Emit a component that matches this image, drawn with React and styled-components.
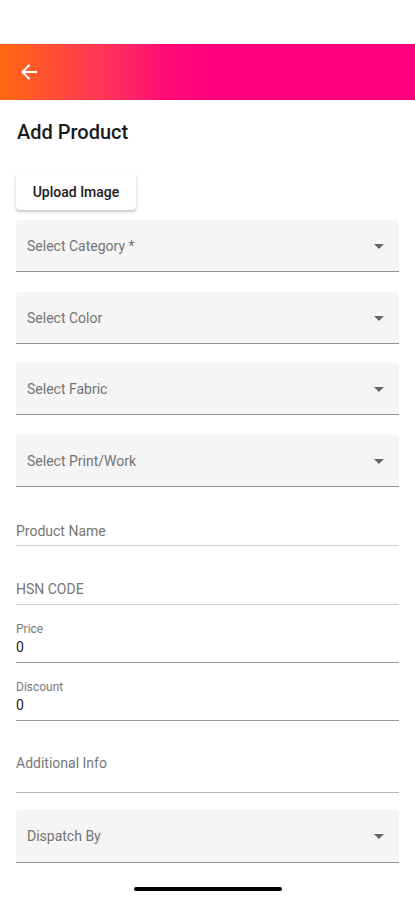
import React from "react";
import styled, { createGlobalStyle } from "styled-components";

const GlobalStyle = createGlobalStyle`
  html, body { margin: 0; padding: 0; background: #ffffff; }
  body { font-family: Roboto, "Noto Sans", Arial, sans-serif; -webkit-font-smoothing: antialiased; }
  * { box-sizing: border-box; }
`;

const Page = styled.div`
  width: 415px;
  height: 900px;
  background: #fff;
  padding-top: 44px;
  display: flex;
  flex-direction: column;
  position: relative;
  overflow: hidden;
`;

const AppBar = styled.header`
  height: 56px;
  display: flex;
  align-items: center;
  padding-left: 17px;
  background: linear-gradient(90deg, #ff6a10 0%, #ff3458 25%, #ff0c76 40%, #ff007f 52%, #ff007f 100%);
`;

const BackButton = styled.button`
  border: 0;
  background: transparent;
  padding: 0;
  width: 24px;
  height: 24px;
  display: flex;
  color: #fff;
`;

const Content = styled.main`
  padding: 0 16px;
  display: flex;
  flex-direction: column;
`;

const Title = styled.h1`
  margin: 20px 0 0 1px;
  font-size: 20px;
  line-height: 24px;
  font-weight: 500;
  color: #1a1a1a;
`;

const UploadButton = styled.button`
  margin-top: 29px;
  align-self: flex-start;
  width: 120px;
  height: 37px;
  border: 0;
  border-radius: 4px;
  background: #fff;
  box-shadow: 0 2px 3px rgba(0, 0, 0, 0.22), 0 0 1px rgba(0, 0, 0, 0.12);
  font-family: Roboto, sans-serif;
  font-size: 14px;
  font-weight: 500;
  color: #1a1a1a;
  padding: 0;
`;

const SelectBox = styled.div`
  margin-top: ${(p) => p.$gap}px;
  height: ${(p) => p.$h || 52}px;
  width: 383px;
  background: #f5f5f5;
  border-radius: 4px 4px 0 0;
  border-bottom: 1px solid #8f8f8f;
  display: flex;
  align-items: center;
  justify-content: space-between;
  padding: 0 15px 0 11px;
`;

const SelectText = styled.span`
  font-size: 14px;
  color: #737373;
`;

const Caret = styled.span`
  width: 0;
  height: 0;
  border-left: 5px solid transparent;
  border-right: 5px solid transparent;
  border-top: 5px solid #666;
  margin-top: 1px;
`;

const Field = styled.div`
  margin-top: ${(p) => p.$gap}px;
  height: ${(p) => p.$h || 46}px;
  width: 383px;
  border-bottom: 1px solid ${(p) => p.$line || "#c4c4c4"};
  display: flex;
  flex-direction: column;
  justify-content: ${(p) => (p.$top ? "flex-start" : "flex-end")};
  padding-top: ${(p) => p.$pt || 0}px;
  padding-bottom: ${(p) => p.$pb || 0}px;
`;

const Placeholder = styled.span`
  font-size: 14px;
  line-height: 20px;
  color: #767676;
`;

const SmallLabel = styled.span`
  font-size: 12px;
  line-height: 16px;
  color: #7a7a7a;
`;

const Value = styled.span`
  font-size: 14px;
  line-height: 20px;
  color: #222;
`;

const HomeIndicator = styled.div`
  position: absolute;
  left: 134px;
  bottom: 9px;
  width: 148px;
  height: 4px;
  border-radius: 2px;
  background: #000;
`;

const ArrowBack = () => (
  <svg width="24" height="24" viewBox="0 0 24 24" fill="currentColor">
    <path d="M20 11H7.83l5.59-5.59L12 4l-8 8 8 8 1.41-1.41L7.83 13H20v-2z" />
  </svg>
);

const Select = ({ gap, h, children }) => (
  <SelectBox $gap={gap} $h={h}>
    <SelectText>{children}</SelectText>
    <Caret />
  </SelectBox>
);

export default function App() {
  return (
    <>
      <GlobalStyle />
      <Page>
        <AppBar>
          <BackButton aria-label="back">
            <ArrowBack />
          </BackButton>
        </AppBar>
        <Content>
          <Title>Add Product</Title>
          <UploadButton>Upload Image</UploadButton>
          <Select gap={10}>Select Category *</Select>
          <Select gap={20}>Select Color</Select>
          <Select gap={19}>Select Fabric</Select>
          <Select gap={20}>Select Print/Work</Select>

          <Field $gap={13} $pb={4} $line="#cfcfcf">
            <Placeholder>Product Name</Placeholder>
          </Field>
          <Field $gap={13} $pb={5} $line="#cfcfcf">
            <Placeholder>HSN CODE</Placeholder>
          </Field>
          <Field $gap={12} $pb={5} $line="#9a9a9a">
            <SmallLabel>Price</SmallLabel>
            <Value>0</Value>
          </Field>
          <Field $gap={12} $pb={5} $line="#9a9a9a">
            <SmallLabel>Discount</SmallLabel>
            <Value>0</Value>
          </Field>
          <Field $gap={12} $h={60} $top $pt={20} $line="#b5b5b5">
            <Placeholder>Additional Info</Placeholder>
          </Field>
          <Select gap={17} h={53}>Dispatch By</Select>
        </Content>
        <HomeIndicator />
      </Page>
    </>
  );
}
